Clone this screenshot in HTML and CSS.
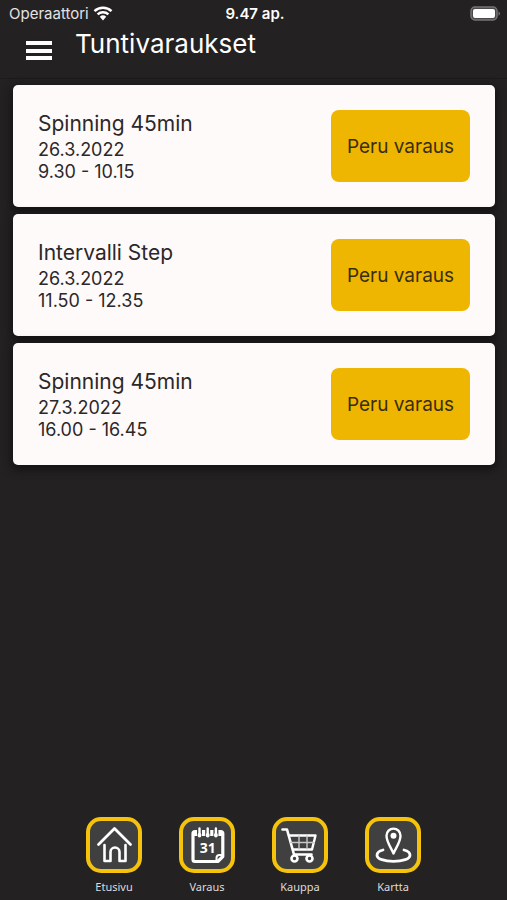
FILE: index.html
```html
<!DOCTYPE html>
<html lang="fi">
<head>
<meta charset="utf-8">
<meta name="viewport" content="width=device-width, initial-scale=1">
<title>Tuntivaraukset</title>
<link rel="stylesheet" href="styles.css">
</head>
<body>
<div class="status">
  <div class="carrier">
    <span>Operaattori</span>
    <svg class="wifi" viewBox="0 0 20 15" aria-hidden="true">
      <path d="M1.5 5.2a12.3 12.3 0 0 1 17 0M4.6 8.4a7.9 7.9 0 0 1 10.8 0" fill="none" stroke="currentColor" stroke-width="2.5"/>
      <path d="M6.8 10.8a4.7 4.7 0 0 1 6.4 0L10 14.4z" fill="currentColor"/>
    </svg>
  </div>
  <span class="clock">9.47 ap.</span>
  <svg class="battery" viewBox="0 0 31 15" aria-hidden="true">
    <rect x="1" y="1" width="26" height="13" rx="4" fill="#4c494a" stroke="#777475" stroke-width="1.5"/>
    <rect x="3" y="3" width="22" height="9" rx="2" fill="#fff"/>
    <path d="M28.5 5.2q3 2.3 0 4.6z" fill="#777475"/>
  </svg>
</div>
<header class="header">
  <button class="menu" type="button" aria-label="Valikko"><span></span><span></span><span></span></button>
  <h1>Tuntivaraukset</h1>
</header>
<main class="list">
  <article class="card">
    <div><h2>Spinning 45min</h2><p>26.3.2022</p><p>9.30 - 10.15</p></div>
    <button class="cancel" type="button">Peru varaus</button>
  </article>
  <article class="card">
    <div><h2>Intervalli Step</h2><p>26.3.2022</p><p>11.50 - 12.35</p></div>
    <button class="cancel" type="button">Peru varaus</button>
  </article>
  <article class="card">
    <div><h2>Spinning 45min</h2><p>27.3.2022</p><p>16.00 - 16.45</p></div>
    <button class="cancel" type="button">Peru varaus</button>
  </article>
</main>
<nav class="tabs">
  <a href="#etusivu">
    <span class="tile"><svg viewBox="0 0 56 56" aria-hidden="true">
      <path d="M12.500 27.500 28.500 11.500 44.500 27.500" stroke-width="2.800"/>
      <path d="M18.500 28V44H24.500V35a4.500 4.500 0 0 1 9 0V44H39.500V28" stroke-width="2.600"/>
    </svg></span>
    <span>Etusivu</span>
  </a>
  <a href="#varaus">
    <span class="tile"><svg viewBox="0 0 56 56" aria-hidden="true">
      <path d="M16 14.500H42a1.800 1.800 0 0 1 1.800 1.800V39.500l-5 5H16a2 2 0 0 1-2-2V16.500a2 2 0 0 1 2-2z" stroke-width="3.200"/>
      <path d="M14 16.500H43.500" stroke-width="5" stroke-linecap="butt"/>
      <path d="M37.500 44v-3a3 3 0 0 1 3-3H43.500" stroke-width="2"/>
      <path d="M20.500 12v6.500M28.700 12v6.500M36.900 12v6.500" stroke="#404040" stroke-width="5"/>
      <path d="M20.500 11.500v7M28.700 11.500v7M36.900 11.500v7" stroke-width="2.400"/>
      <path d="M20.500 17.800v.8M28.700 17.800v.8M36.900 17.800v.8" stroke-width="3.800"/>
      <text class="date" x="28.700" y="35.700" text-anchor="middle">31</text>
    </svg></span>
    <span>Varaus</span>
  </a>
  <a href="#kauppa">
    <span class="tile"><svg viewBox="0 0 56 56" aria-hidden="true">
      <path d="M10.500 12.500H15L22 37.500H39.500" stroke-width="2.600"/>
      <path d="M17 18.500H43.500L40 32.500H21" stroke-width="2.400"/>
      <path d="M18.500 25.500H42M27 19v13M35 19v13" stroke="#c8c8c8" stroke-width="1.400"/>
      <circle cx="22.500" cy="41.500" r="3" stroke-width="2.600"/>
      <circle cx="37.500" cy="41.500" r="3" stroke-width="2.600"/>
    </svg></span>
    <span>Kauppa</span>
  </a>
  <a href="#kartta">
    <span class="tile"><svg viewBox="0 0 56 56" aria-hidden="true">
      <path d="M28.500 36.500C26 30.500 21.500 25 21.500 18.800a7 7.200 0 0 1 14 0C35.500 25 31 30.500 28.500 36.500z" stroke-width="2.400"/>
      <circle cx="28.500" cy="18.800" r="3" class="solid"/>
      <path d="M18 33C14 34 12 36 12 38.200c0 3.700 7.400 6.100 16.500 6.100s16.500-2.400 16.500-6.100c0-2.200-2-4.200-6-5.200" stroke-width="2.800"/>
    </svg></span>
    <span>Kartta</span>
  </a>
</nav>
</body>
</html>
```
FILE: styles.css
```css
* {
  box-sizing: border-box;
}

body {
  margin: 0;
  min-height: 100vh;
  display: flex;
  flex-direction: column;
  background: #242122;
  color: #fff;
  font-family: Inter, "Liberation Sans", sans-serif;
}

h1, h2, p {
  margin: 0;
  font-weight: 400;
}

button {
  border: 0;
  font: inherit;
  cursor: pointer;
}

.status {
  display: grid;
  grid-template-columns: 1fr auto 1fr;
  align-items: center;
  height: 27px;
  padding: 0 6px 0 9px;
  font-size: 15px;
}

.carrier {
  display: flex;
  align-items: center;
  gap: 4px;
  color: #e4e2e3;
}

.wifi {
  width: 20px;
  height: 15px;
  color: #fff;
}

.clock {
  font-weight: 600;
}

.battery {
  justify-self: end;
  width: 31px;
  height: 15px;
}

.header {
  display: flex;
  gap: 23px;
  height: 52px;
  padding: 1px 0 0 26px;
  border-bottom: 1px solid #1e1b1c;
}

.header h1 {
  font-size: 26px;
  line-height: 32px;
}

.menu {
  display: flex;
  flex-direction: column;
  justify-content: space-between;
  align-self: flex-start;
  width: 26px;
  height: 19px;
  margin-top: 13px;
  padding: 0;
  background: none;
}

.menu span {
  height: 4px;
  background: #fff;
}

.list {
  display: flex;
  flex-direction: column;
  gap: 7px;
  padding: 6px 12px 0 13px;
}

.card {
  display: flex;
  align-items: center;
  justify-content: space-between;
  height: 122px;
  padding: 0 25px;
  border-radius: 5px;
  background: #fffafa;
  color: #2b2829;
  box-shadow: 0 3px 8px 2px #141313;
}

.card h2 {
  font-size: 21px;
  line-height: 30px;
}

.card p {
  font-size: 18px;
  line-height: 22px;
}

.cancel {
  width: 139px;
  height: 72px;
  padding: 0;
  border-radius: 8px;
  background: #eeb600;
  color: #3a2e10;
  font-size: 19px;
}

.tabs {
  display: flex;
  justify-content: center;
  gap: 37px;
  margin-top: auto;
  padding-bottom: 5px;
}

.tabs a {
  display: flex;
  flex-direction: column;
  align-items: center;
  gap: 5px;
  width: 56px;
  color: #dedcdd;
  font-family: "Noto Sans", sans-serif;
  font-size: 11px;
  line-height: 17px;
  text-decoration: none;
}

.tile {
  width: 56px;
  height: 56px;
  border: 4px solid #f5c20c;
  border-radius: 15px;
  background: #404040;
}

.tile svg {
  display: block;
  margin: -4px;
  width: 56px;
  height: 56px;
  fill: none;
  stroke: #fff;
  stroke-linecap: round;
  stroke-linejoin: round;
}

.tile .solid {
  fill: #fff;
  stroke: none;
}

.tile .date {
  fill: #fff;
  stroke: none;
  font-size: 14px;
  font-weight: 700;
}
```
